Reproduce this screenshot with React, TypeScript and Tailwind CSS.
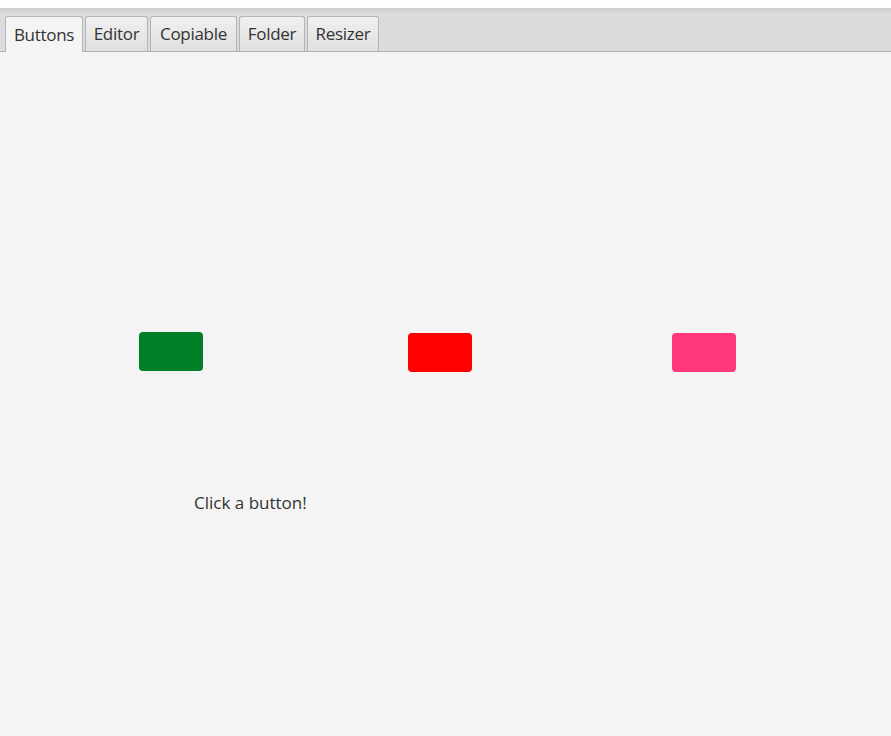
import { useState } from "react";

const tabs = [
  { name: "Buttons", w: "w-[78px]" },
  { name: "Editor", w: "w-[63px]" },
  { name: "Copiable", w: "w-[87px]" },
  { name: "Folder", w: "w-[66px]" },
  { name: "Resizer", w: "w-[72px]" },
];

const App = () => {
  const [active, setActive] = useState("Buttons");
  const [msg, setMsg] = useState("Click a button!");

  return (
    <div className="h-[736px] w-[891px] flex flex-col bg-white text-[#333] font-['Open_Sans',sans-serif] overflow-hidden">
      <div className="mt-[8px] h-[44px] shrink-0 flex items-end gap-[2px] pl-[5px] bg-gradient-to-b from-[#cfcfcf] via-[#dcdcdc] via-[15%] to-[#dcdcdc] border-b border-[#b0b0b0]">
        {tabs.map((t) =>
          t.name === active ? (
            <button
              key={t.name}
              className={`${t.w} h-[36px] -mb-px flex items-center justify-center rounded-t-[3px] border border-b-0 border-[#b5b5b5] bg-[#f4f4f4] text-[17px] tracking-[-0.3px]`}
            >
              {t.name}
            </button>
          ) : (
            <button
              key={t.name}
              onClick={() => setActive(t.name)}
              className={`${t.w} h-[35px] flex items-center justify-center rounded-t-[3px] border border-b-0 border-[#b5b5b5] bg-gradient-to-b from-[#f0f0f0] to-[#e0e0e0] text-[17px] tracking-[-0.3px]`}
            >
              {t.name}
            </button>
          )
        )}
      </div>

      <main className="flex-1 bg-[#f4f4f4]">
        <div className="flex items-start pt-[280px] pl-[139px]">
          <button
            onClick={() => setMsg("Green clicked")}
            className="w-[64px] h-[39px] rounded-[4px] bg-[#007f27]"
          />
          <button
            onClick={() => setMsg("Red clicked")}
            className="ml-[205px] mt-px w-[64px] h-[39px] rounded-[4px] bg-[#ff0000]"
          />
          <button
            onClick={() => setMsg("Pink clicked")}
            className="ml-[200px] mt-px w-[64px] h-[39px] rounded-[4px] bg-[#ff377b]"
          />
        </div>
        <p className="mt-[119px] pl-[194px] text-[17px] leading-[24px]">{msg}</p>
      </main>
    </div>
  );
};

export default App;
